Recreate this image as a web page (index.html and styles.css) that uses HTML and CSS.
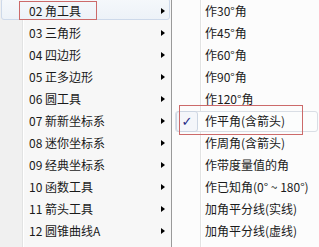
FILE: index.html
```html
<!DOCTYPE html>
<html lang="zh">
<head>
<meta charset="utf-8">
<link rel="stylesheet" href="styles.css">
</head>
<body>
<div class="screen">
  <div class="menu menu-main">
    <div class="item active"><span class="label">02 角工具</span><span class="arrow"></span></div>
    <div class="item"><span class="label">03 三角形</span><span class="arrow"></span></div>
    <div class="item"><span class="label">04 四边形</span><span class="arrow"></span></div>
    <div class="item"><span class="label">05 正多边形</span><span class="arrow"></span></div>
    <div class="item"><span class="label">06 圆工具</span><span class="arrow"></span></div>
    <div class="item"><span class="label">07 新新坐标系</span><span class="arrow"></span></div>
    <div class="item"><span class="label">08 迷你坐标系</span><span class="arrow"></span></div>
    <div class="item"><span class="label">09 经典坐标系</span><span class="arrow"></span></div>
    <div class="item"><span class="label">10 函数工具</span><span class="arrow"></span></div>
    <div class="item"><span class="label">11 箭头工具</span><span class="arrow"></span></div>
    <div class="item"><span class="label">12 圆锥曲线A</span><span class="arrow"></span></div>
    <div class="note note-main"></div>
  </div>
  <div class="menu menu-sub">
    <div class="item"><span class="label">作30°角</span></div>
    <div class="item"><span class="label">作45°角</span></div>
    <div class="item"><span class="label">作60°角</span></div>
    <div class="item"><span class="label">作90°角</span></div>
    <div class="item"><span class="label">作120°角</span></div>
    <div class="item checked"><span class="check">✓</span><span class="label">作平角(含箭头)</span></div>
    <div class="item"><span class="label">作周角(含箭头)</span></div>
    <div class="item"><span class="label">作带度量值的角</span></div>
    <div class="item"><span class="label">作已知角(0° ~ 180°)</span></div>
    <div class="item"><span class="label">加角平分线(实线)</span></div>
    <div class="item"><span class="label">加角平分线(虚线)</span></div>
    <div class="note note-sub"></div>
  </div>
</div>
</body>
</html>
```
FILE: styles.css
```css
html, body {
  margin: 0;
  padding: 0;
  background: #f7f7f7;
}
.screen {
  display: flex;
  width: 319px;
  height: 247px;
  overflow: hidden;
  font-family: "Noto Sans CJK SC", "Noto Sans", sans-serif;
  font-size: 12px;
  color: #1a1a1a;
}
.menu {
  position: relative;
  height: 247px;
}
.menu-main {
  width: 171px;
  flex: none;
  background: linear-gradient(to right, #f0f0f0 0, #f0f0f0 22px, #e2e3e3 22px, #e2e3e3 23px, #ffffff 23px, #ffffff 24px, #f7f7f7 24px);
}
.menu-sub {
  flex: 1;
  border-left: 1px solid #9a9a9a;
  background: linear-gradient(to right, #fcfcfc 0, #fcfcfc 28px, #e2e3e3 28px, #e2e3e3 29px, #ffffff 29px, #ffffff 30px, #fcfcfc 30px);
}
.item {
  position: relative;
  height: 22px;
  display: flex;
  align-items: center;
}
.menu-main .item {
  padding-left: 29px;
  padding-right: 6px;
}
.menu-sub .item {
  padding-left: 33px;
}
.label {
  position: relative;
  flex: 1;
  white-space: nowrap;
  line-height: 22px;
}
.arrow {
  position: relative;
  width: 0;
  height: 0;
  border-top: 3.5px solid transparent;
  border-bottom: 3.5px solid transparent;
  border-left: 4px solid #000;
}
.menu-main .item.active::before {
  content: "";
  position: absolute;
  left: 1px;
  right: 1px;
  top: -2px;
  bottom: 2px;
  border: 1px solid #cdd9ea;
  border-radius: 3px;
  background: linear-gradient(#f5f8fb, #edf2f8);
}
.menu-sub .item.checked::before {
  content: "";
  position: absolute;
  left: 3px;
  right: 1px;
  top: 1px;
  bottom: 0;
  border: 1px solid #d9dee5;
  border-radius: 3px;
  background: #fcfdfd;
}
.check {
  position: absolute;
  left: 4px;
  top: 1px;
  width: 20px;
  height: 19px;
  border: 1px solid #ccd5e2;
  border-radius: 3px;
  background: #f4f6fa;
  color: #1d2c86;
  font-family: "DejaVu Sans", sans-serif;
  font-size: 13px;
  font-weight: bold;
  line-height: 19px;
  text-align: center;
}
.note {
  position: absolute;
  border: 1px solid #cc6a6a;
}
.note-main {
  left: 19px;
  top: 1px;
  width: 76px;
  height: 17px;
}
.note-sub {
  left: 7px;
  top: 105px;
  width: 122px;
  height: 28px;
}
```
